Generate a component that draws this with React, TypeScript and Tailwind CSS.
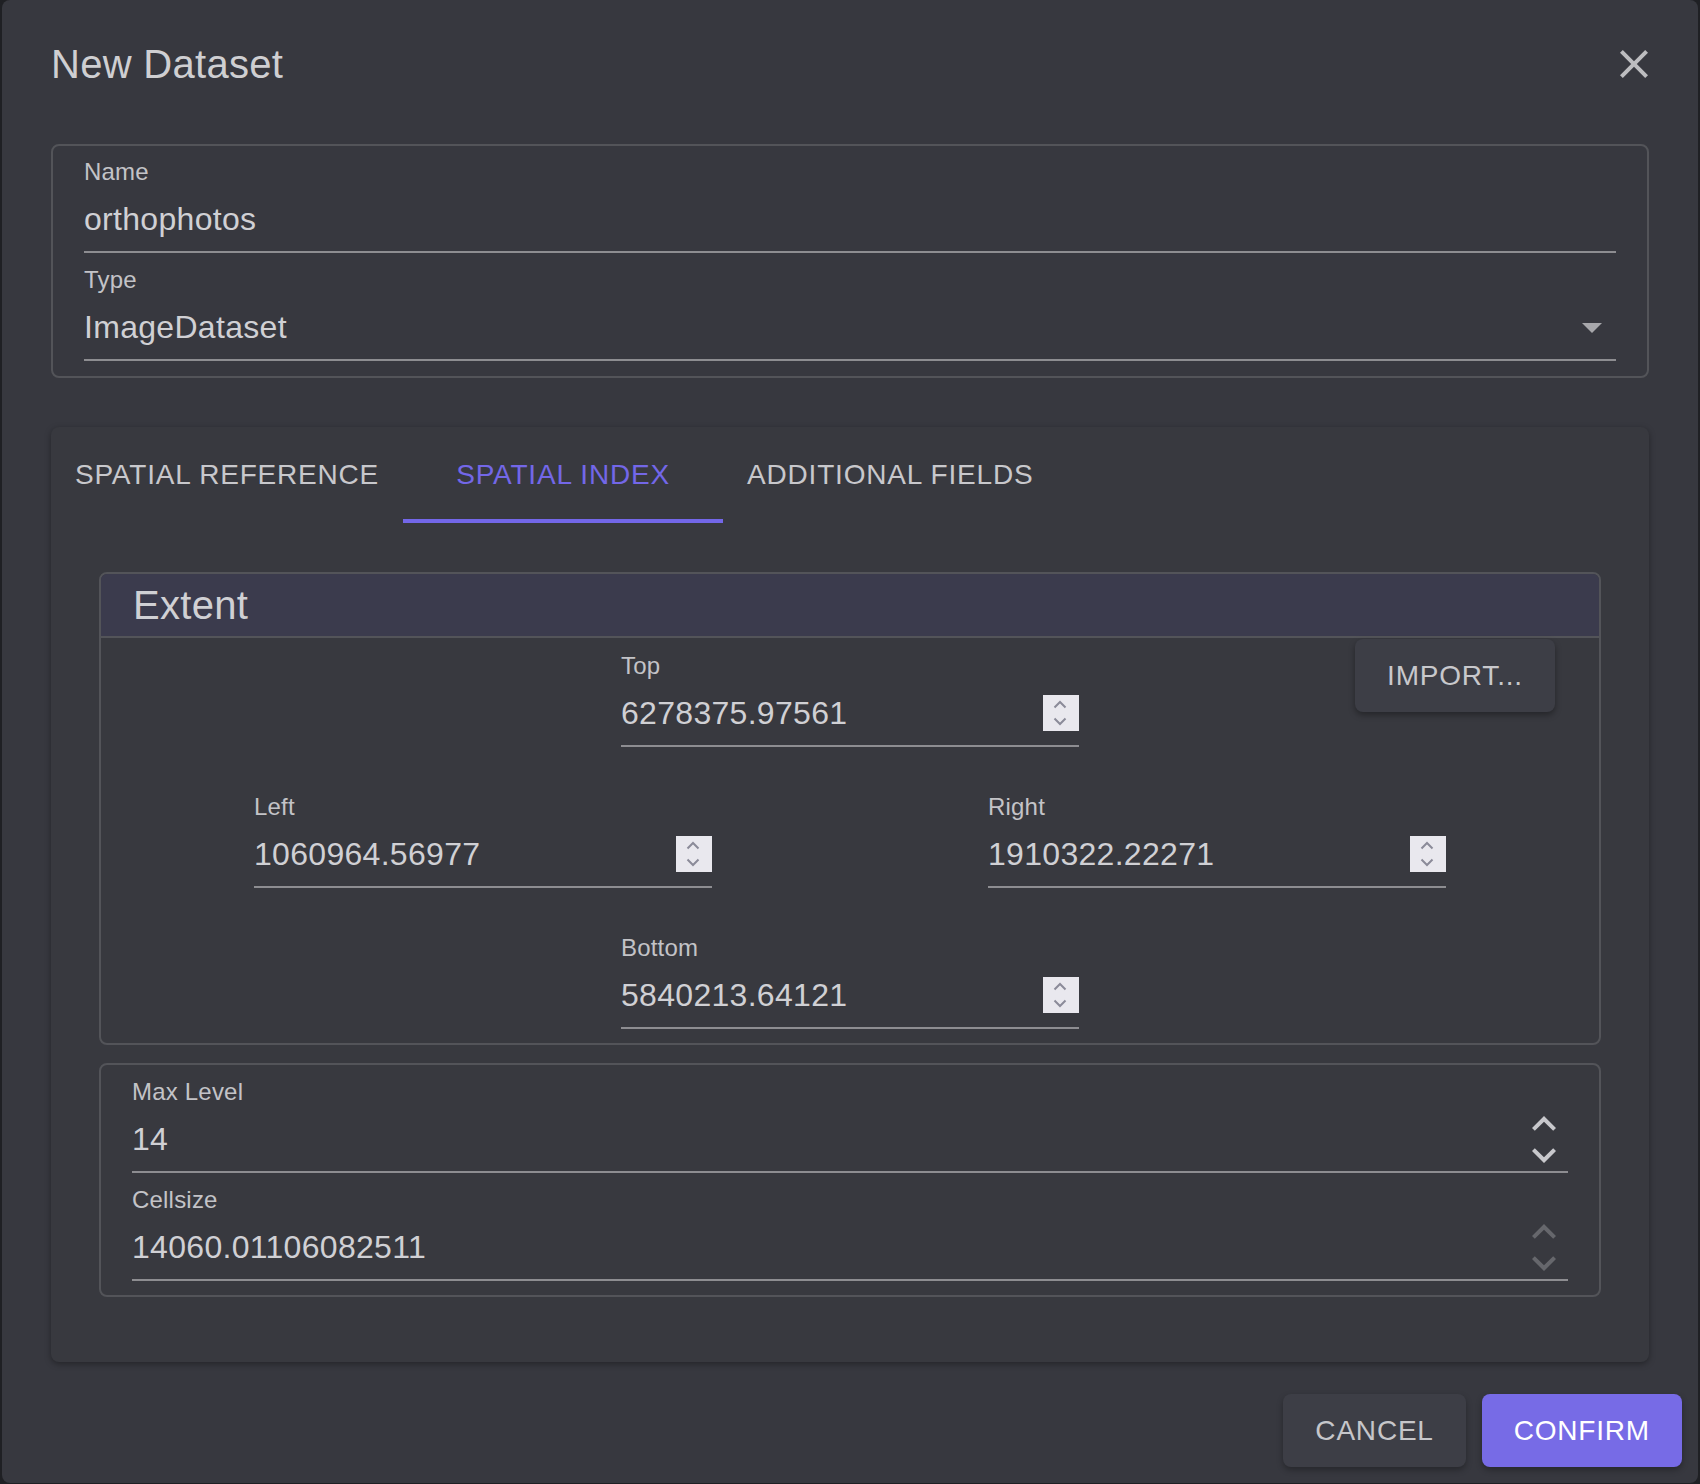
import React from "react";

const labelCls = "h-[24px] text-[24px] leading-[24px] tracking-[0.2px] text-[#c3c3c7] whitespace-nowrap";
const valueCls = "h-[46px] flex-1 text-[32px] leading-[46px] tracking-[0.3px] text-[#d0d0d4] whitespace-nowrap";

const NativeSpinner = () => (
  <div className="h-[36px] w-[36px] bg-[#e9e8ee]">
    <svg width="36" height="36" viewBox="0 0 36 36" fill="none">
      <polyline points="11.5,12.5 17,7 22.5,12.5" stroke="#8b8b99" strokeWidth="2" />
      <polyline points="11.5,23.5 17,29 22.5,23.5" stroke="#8b8b99" strokeWidth="2" />
    </svg>
  </div>
);

const MuiSpinner = ({ dim }: { dim?: boolean }) => {
  const color = dim ? "#66676c" : "#c8c8cc";
  return (
    <div className="flex w-[48px] flex-col">
      <svg width="48" height="48" viewBox="0 0 24 24" fill={color}>
        <path d="M7.41 15.41L12 10.83l4.59 4.58L18 14l-6-6-6 6z" />
      </svg>
      <svg width="48" height="48" viewBox="0 0 24 24" fill={color} className="-mt-[17px]">
        <path d="M7.41 8.59L12 13.17l4.59-4.58L18 10l-6 6-6-6 1.41-1.41z" />
      </svg>
    </div>
  );
};

const SelectArrow = () => (
  <svg width="48" height="48" viewBox="0 0 24 24" fill="#a7a7ab">
    <path d="M7 10l5 5 5-5z" />
  </svg>
);

const Field = ({
  label,
  value,
  adornment,
  className = "",
}: {
  label: string;
  value: string;
  adornment?: React.ReactNode;
  className?: string;
}) => (
  <div className={`flex flex-col ${className}`}>
    <div className={labelCls}>{label}</div>
    <div className="mt-[4px] flex items-center border-b-2 border-[#8d8d91] pt-[8px] pb-[9px]">
      <div className={valueCls}>{value}</div>
      {adornment && <div className="flex h-[46px] items-center">{adornment}</div>}
    </div>
  </div>
);

const Tab = ({ label, active }: { label: string; active?: boolean }) => (
  <div
    className={`flex h-[96px] min-w-[320px] items-center justify-center border-b-4 px-[24px] pt-[4px] text-[28px] tracking-[0.8px] whitespace-nowrap ${
      active ? "border-[#7367e8] text-[#7367e8]" : "border-transparent text-[#c8c8cc]"
    }`}
  >
    {label}
  </div>
);

const App = () => {
  return (
    <div className="min-h-screen bg-[#1f2024] px-[2px] font-['Liberation_Sans',Arial,sans-serif]">
      <div className="flex h-[1483px] w-[1696px] flex-col rounded-[8px] bg-[#37383f]">
        <div className="flex h-[96px] items-center justify-between pt-[32px] pl-[49px] pr-[40px]">
          <h2 className="text-[40px] leading-[64px] tracking-[0.3px] text-[#cfcfd2]">New Dataset</h2>
          <svg width="48" height="48" viewBox="0 0 24 24" fill="#bdbdc0" className="-mt-[1px]">
            <path d="M19 6.41L17.59 5 12 10.59 6.41 5 5 6.41 10.59 12 5 17.59 6.41 19 12 13.41 17.59 19 19 17.59 13.41 12z" />
          </svg>
        </div>

        <div className="px-[49px] pt-[48px]">
          <div className="flex flex-col gap-[15px] rounded-[8px] border-2 border-[#535459] px-[31px] pt-[14px] pb-[15px]">
            <Field label="Name" value="orthophotos" />
            <Field label="Type" value="ImageDataset" adornment={<SelectArrow />} />
          </div>

          <div className="mt-[49px] rounded-[8px] bg-[#38393f] shadow-[0_2px_6px_rgba(0,0,0,0.35)]">
            <div className="flex">
              <Tab label="SPATIAL REFERENCE" />
              <Tab label="SPATIAL INDEX" active />
              <Tab label="ADDITIONAL FIELDS" />
            </div>

            <div className="flex flex-col gap-[18px] px-[48px] pt-[49px] pb-[65px]">
              <div className="overflow-hidden rounded-[8px] border-2 border-[#535459]">
                <div className="h-[64px] border-b-2 border-[#535459] bg-[#3b3b4d] pl-[32px] text-[40px] leading-[62px] tracking-[0.3px] text-[#d0d0d4]">
                  Extent
                </div>
                <div className="flex flex-col gap-[48px] pt-[16px] pb-[14px]">
                  <div className="grid grid-cols-[1fr_458px_1fr]">
                    <div />
                    <Field label="Top" value="6278375.97561" adornment={<NativeSpinner />} />
                    <button className="-mt-[15px] mr-[44px] h-[73px] w-[200px] self-start justify-self-end rounded-[8px] bg-[#3d3e46] text-[28px] leading-[49px] tracking-[0.8px] text-[#c8c8cc] shadow-[0_3px_6px_rgba(0,0,0,0.35)]">
                      IMPORT...
                    </button>
                  </div>
                  <div className="flex justify-center gap-[276px]">
                    <Field
                      label="Left"
                      value="1060964.56977"
                      adornment={<NativeSpinner />}
                      className="w-[458px]"
                    />
                    <Field
                      label="Right"
                      value="1910322.22271"
                      adornment={<NativeSpinner />}
                      className="w-[458px]"
                    />
                  </div>
                  <div className="flex justify-center">
                    <Field
                      label="Bottom"
                      value="5840213.64121"
                      adornment={<NativeSpinner />}
                      className="w-[458px]"
                    />
                  </div>
                </div>
              </div>

              <div className="flex flex-col gap-[15px] rounded-[8px] border-2 border-[#535459] px-[31px] pt-[15px] pb-[14px]">
                <Field label="Max Level" value="14" adornment={<MuiSpinner />} />
                <Field label="Cellsize" value="14060.01106082511" adornment={<MuiSpinner dim />} />
              </div>
            </div>
          </div>
        </div>

        <div className="mt-[32px] flex justify-end gap-[16px] pr-[16px]">
          <button className="h-[73px] rounded-[8px] bg-[#3d3e46] px-[32px] text-[28px] leading-[49px] tracking-[0.8px] text-[#c6c6ca] shadow-[0_3px_6px_rgba(0,0,0,0.3)]">
            CANCEL
          </button>
          <button className="h-[73px] rounded-[8px] bg-[#776be6] px-[32px] text-[28px] leading-[49px] tracking-[0.8px] text-white shadow-[0_3px_6px_rgba(0,0,0,0.3)]">
            CONFIRM
          </button>
        </div>
      </div>
    </div>
  );
};

export default App;
